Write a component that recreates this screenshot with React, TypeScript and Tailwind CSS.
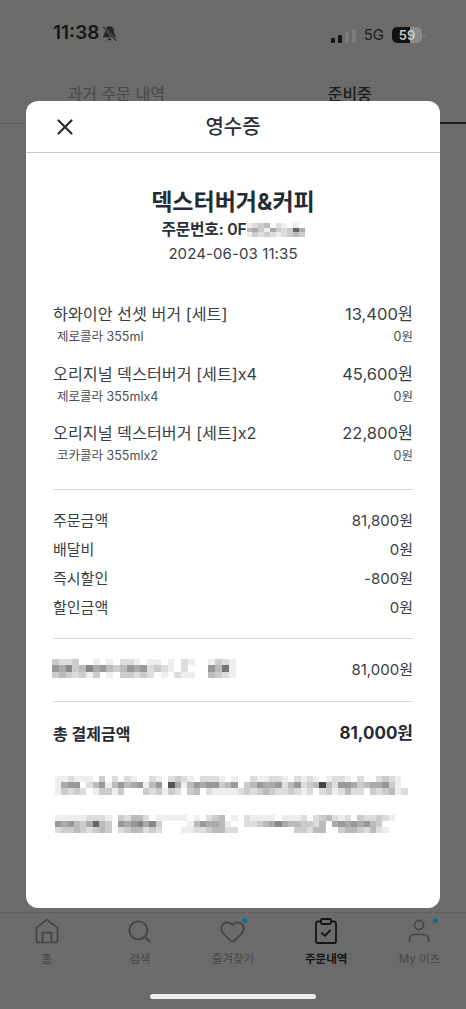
import { Heart, Search, X } from 'lucide-react';

const items = [
  { name: '하와이안 선셋 버거 [세트]', price: '13,400원', option: '제로콜라 355ml' },
  { name: '오리지널 덱스터버거 [세트]x4', price: '45,600원', option: '제로콜라 355mlx4' },
  { name: '오리지널 덱스터버거 [세트]x2', price: '22,800원', option: '코카콜라 355mlx2' },
];

const summary = [
  ['주문금액', '81,800원'],
  ['배달비', '0원'],
  ['즉시할인', '-800원'],
  ['할인금액', '0원'],
];

// one hex digit per cell, used as a grey level
const payLabel = [
  'cddcffefefddefeefefdeffecde',
  '9a8cb8a9bcb9a9dcdefdfff9b7e',
  'cbcdcecfefccdcdfefdeeffbcde',
];
const noteOne = [
  'eedeeefcfdfdeffdefdcdefdddefeffdeeddefdedefeddefdffdcdeff',
  'ea99fdb9eb9ba9eb9f5aeb9a99cb9fcb9aa9db9dcb4bd99acbaa9cef',
  'ecdcdfeccecfffcdcecdfcbfdeeeedcdcbcddcdedfdcedbddfcdcbed',
];
const noteTwo = [
  'eeeeedddefcdbbdfeeeeefefdcbfefdeeeefeeedfdcbdedfcddcdef',
  '9a9bca6bcf9a98a8cffffeb9aabeffddcba8abbccdbfa9a9a9bcf',
  'dccbcdcbcfdcbbdcdfffeeddcbbddfffffffffccdbbffcbbcdbdef',
];
const orderMask = [
  'edcbfdefef',
  'baceacdc6a',
  'ecdcdedcbc',
];

function Mosaic({ rows, cell }: { rows: string[]; cell: string }) {
  return (
    <div className="flex flex-col blur-[0.6px]">
      {rows.map((row, i) => (
        <div key={i} className="flex">
          {row.split('').map((c, j) => (
            <span key={j} className={cell} style={{ background: `#${c}${c}${c}` }} />
          ))}
        </div>
      ))}
    </div>
  );
}

function HomeIcon() {
  return (
    <svg width="24" height="26" viewBox="0 0 24 26" fill="none" stroke="#454545" strokeWidth="1.7" strokeLinejoin="round">
      <path d="M1.500 9.600 12 1.600l10.500 8V22.500a2 2 0 0 1-2 2h-17a2 2 0 0 1-2-2z" />
      <path d="M7.600 24.500V14.600h8.800v9.900" />
    </svg>
  );
}

function ClipboardIcon() {
  return (
    <svg width="22" height="26" viewBox="0 0 22 26" fill="none" stroke="#141414" strokeWidth="1.8" strokeLinecap="round" strokeLinejoin="round">
      <path d="M6 3.500H3a2 2 0 0 0-2 2v17.500a2 2 0 0 0 2 2h16a2 2 0 0 0 2-2V5.500a2 2 0 0 0-2-2h-3" />
      <rect x="6" y="1" width="10" height="5" rx="1.200" />
      <path d="m6.800 15 3 2.800 5.400-5.300" />
    </svg>
  );
}

function UserIcon() {
  return (
    <svg width="22" height="24" viewBox="0 0 22 24" fill="none" stroke="#454545" strokeWidth="1.7" strokeLinecap="round">
      <circle cx="11" cy="6" r="4.600" />
      <path d="M1.500 22.500v-2.500a4.500 4.500 0 0 1 4.500-4.500h10a4.500 4.500 0 0 1 4.500 4.500v2.500" />
    </svg>
  );
}

function NavItem({ label, active, dot, icon }: { label: string; active?: boolean; dot?: string; icon: React.ReactNode }) {
  return (
    <div className="flex flex-col items-center">
      <div className="relative flex h-[28px] items-center justify-center">
        {icon}
        {dot && <span className={`absolute top-[1px] size-[5px] rounded-full bg-[#0a6a9a] ${dot}`} />}
      </div>
      <span className={`mt-[6px] text-[11.500px] leading-[16px] ${active ? 'font-bold text-[#141414]' : 'text-[#474747]'}`}>
        {label}
      </span>
    </div>
  );
}

export default function App() {
  return (
    <div className="relative flex h-[1009px] w-[466px] flex-col overflow-hidden bg-[#6b6b6b] font-['Inter','Noto_Sans_CJK_KR',sans-serif]">
      <div className="flex h-[64px] items-end justify-between pb-[19px] pl-[53px] pr-[41px] text-[#161616]">
        <div className="flex items-center gap-[2px]">
          <span className="text-[19px] font-semibold leading-[24px]">11:38</span>
          <svg width="17" height="17" viewBox="0 0 16 16" fill="#262626">
            <path d="M8 1.200c-2.600 0-4.300 2-4.300 4.600 0 3-1.800 4.300-2 5.700h12.600c-.2-1.400-2-2.700-2-5.700 0-2.600-1.700-4.600-4.300-4.600zM6.200 12.700a1.800 1.800 0 0 0 3.600 0z" />
            <path d="M2 1.500 14.500 15" stroke="#6b6b6b" strokeWidth="2.400" />
            <path d="M2 1.500 14.500 15" stroke="#262626" strokeWidth="1" />
          </svg>
        </div>
        <div className="flex items-center">
          <div className="flex h-[15px] items-end gap-[3px]">
            <span className="h-[5px] w-[4px] rounded-[1px] bg-[#161616]" />
            <span className="h-[8px] w-[4px] rounded-[1px] bg-[#161616]" />
            <span className="h-[11px] w-[4px] rounded-[1px] bg-[#7c7c7c]" />
            <span className="h-[14px] w-[4px] rounded-[1px] bg-[#7c7c7c]" />
          </div>
          <span className="ml-[8px] text-[15px] leading-[20px] text-[#1c1c1c]">5G</span>
          <div className="relative ml-[8px] flex h-[16px] w-[30px] items-center justify-center overflow-hidden rounded-[5px] bg-[#8a8a8a]">
            <span className="absolute inset-y-0 left-0 w-[18px] bg-[#111111]" />
            <span className="relative text-[13px] font-semibold leading-[16px] text-[#c9c9c9]">59</span>
          </div>
          <span className="ml-[1px] h-[5px] w-[2px] rounded-r-sm bg-[#7c7c7c]" />
        </div>
      </div>

      <div className="flex h-[60px] border-b border-[#5f5f5f]">
        <div className="flex flex-1 items-start justify-center pt-[18px] pr-[1px] text-[16px] leading-[24px] text-[#484848]">
          과거 주문 내역
        </div>
        <div className="-mb-px flex flex-1 items-start justify-center border-b-2 border-[#1b1b24] pt-[18px] text-[16px] font-medium leading-[24px] text-[#1c1c1c]">
          준비중
        </div>
      </div>

      <div className="flex-1" />

      <div className="h-[97px] border-t border-[#626262]">
        <div className="grid grid-cols-5 pt-[4px]">
          <NavItem label="홈" icon={<HomeIcon />} />
          <NavItem label="검색" icon={<Search size={27} color="#454545" strokeWidth={1.7} />} />
          <NavItem label="즐겨찾기" dot="-right-[1px]" icon={<Heart size={27} color="#454545" strokeWidth={1.6} />} />
          <NavItem label="주문내역" active icon={<ClipboardIcon />} />
          <NavItem label="My 이츠" dot="-right-[8px]" icon={<UserIcon />} />
        </div>
      </div>
      <div className="absolute bottom-[10px] left-[150px] h-[5px] w-[166px] rounded-full bg-[#ececec]" />

      <div className="absolute left-[26px] top-[101px] flex h-[807px] w-[414px] flex-col rounded-[12px] bg-white text-[#2b2f36]">
        <div className="relative flex h-[52px] flex-none items-center justify-center border-b border-[#c9c9cc]">
          <X className="absolute left-[26px] top-[13px]" size={26} color="#2a2a2a" strokeWidth={2} />
          <span className="pt-[1px] text-[20px] font-medium leading-[28px]">영수증</span>
        </div>

        <div className="flex flex-col items-center pt-[34px]">
          <h1 className="text-[23px] font-bold leading-[30px] text-[#262b33]">덱스터버거&amp;커피</h1>
          <div className="mt-[1px] flex h-[24px] items-center">
            <span className="text-[15.800px] font-semibold leading-[24px] tracking-[-0.2px]">주문번호: 0F</span>
            <Mosaic rows={orderMask} cell="h-[4.500px] w-[5.800px]" />
          </div>
          <p className="mt-[1px] text-[15px] leading-[22px] tracking-[0.1px] text-[#3a3e45]">2024-06-03 11:35</p>
        </div>

        <div className="flex flex-col gap-[14.500px] px-[27px] pt-[37px]">
          {items.map((item) => (
            <div key={item.name}>
              <div className="flex justify-between text-[16.200px] leading-[24px] text-[#3a3e45]">
                <span>{item.name}</span>
                <span className="text-[16.500px]">{item.price}</span>
              </div>
              <div className="mt-[1px] flex justify-between pl-[4px] text-[12.500px] leading-[20px] text-[#4a4e55]">
                <span>{item.option}</span>
                <span>0원</span>
              </div>
            </div>
          ))}
        </div>

        <div className="mx-[27px] mt-[23px] border-t border-[#d8d8dc] pt-[17px]">
          {summary.map(([label, value]) => (
            <div key={label} className="flex h-[29px] items-center justify-between text-[15px] text-[#3a3e45]">
              <span>{label}</span>
              <span>{value}</span>
            </div>
          ))}
        </div>

        <div className="mx-[27px] mt-[15px] flex h-[64px] items-center justify-between border-y border-[#d8d8dc] text-[15px] text-[#3a3e45]">
          <div className="-ml-[1px] -mt-[3px]">
            <Mosaic rows={payLabel} cell="h-[6.500px] w-[6.800px]" />
          </div>
          <span>81,000원</span>
        </div>

        <div className="mx-[27px] flex h-[64px] items-center justify-between text-[16px] font-bold text-[#262b33]">
          <span>총 결제금액</span>
          <span className="text-[17px]">81,000원</span>
        </div>

        <div className="flex flex-col gap-[20px] pl-[29px] pt-[10px]">
          <Mosaic rows={noteOne} cell="h-[6.200px] w-[6.300px]" />
          <Mosaic rows={noteTwo} cell="h-[6.200px] w-[6.300px]" />
        </div>
      </div>
    </div>
  );
}
